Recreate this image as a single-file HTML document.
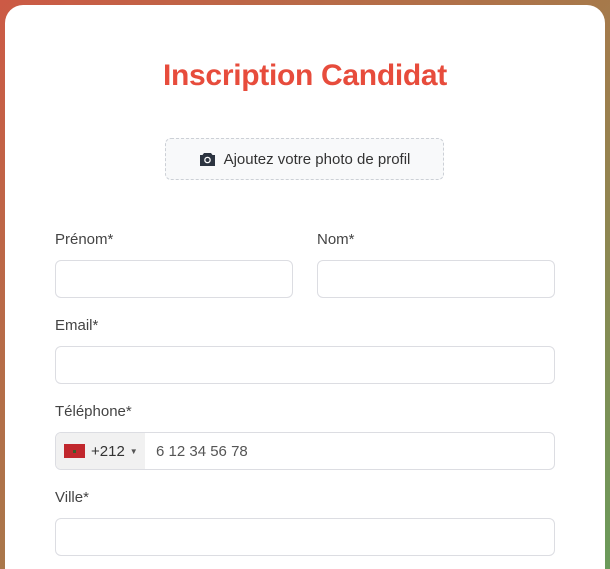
<!DOCTYPE html>
<html><head><meta charset="utf-8"><style>
*{box-sizing:border-box;margin:0;padding:0}
html{width:610px;height:569px;overflow:hidden}
body{width:610px;height:569px;overflow:hidden;background:linear-gradient(135deg,#cc5a45 0%,#a8784a 50%,#6a9a5a 100%);font-family:"Liberation Sans",sans-serif;position:relative}
.card{position:absolute;left:5px;top:5px;width:600px;height:564px;background:#fff;border-radius:18px 18px 0 0}
h1{position:absolute;left:0;width:610px;top:59px;text-align:center;color:#e74c3c;font-size:30px;font-weight:bold;letter-spacing:-0.3px}
.photo{position:absolute;left:165px;top:138px;width:279px;height:42px;border:1px dashed #ccd0d6;border-radius:6px;background:#f8f9fa;color:#333;font-size:15px;display:flex;align-items:center;justify-content:center;gap:8px}
.lbl{position:absolute;font-size:15px;color:#444}
.inp{position:absolute;height:38px;border:1px solid #dcdde2;border-radius:6px;background:#fff}
.cc{position:absolute;left:0;top:0;width:89px;height:36px;background:#f1f1f1;border-radius:5px 0 0 5px;display:flex;align-items:center;font-size:15px;color:#333}
.flag{width:21px;height:14px;background:#c1272d;margin:0 6px 0 8px;position:relative}
.flag:after{content:"";position:absolute;left:9px;top:6px;width:3px;height:3px;background:#3a5a2a}
</style></head><body>
<div class="card"></div>
<h1>Inscription Candidat</h1>
<div class="photo"><svg width="17" height="14" viewBox="0 0 17 14"><path d="M5 1h7l1.5 2H16v11H1V3h2.5z" fill="#2c3440"/><circle cx="8.5" cy="8" r="3.3" fill="#fff"/><circle cx="8.5" cy="8" r="2" fill="#2c3440"/></svg><span>Ajoutez votre photo de profil</span></div>
<div class="lbl" style="left:55px;top:231px">Prénom*</div>
<div class="lbl" style="left:317px;top:231px">Nom*</div>
<div class="inp" style="left:55px;top:260px;width:238px"></div>
<div class="inp" style="left:317px;top:260px;width:238px"></div>
<div class="lbl" style="left:55px;top:317px">Email*</div>
<div class="inp" style="left:55px;top:346px;width:500px"></div>
<div class="lbl" style="left:55px;top:403px">Téléphone*</div>
<div class="inp" style="left:55px;top:432px;width:500px"><div class="cc"><span class="flag"></span>+212<span style="font-size:8px;margin-left:5px;color:#555">▼</span></div><span style="position:absolute;left:100px;top:10px;font-size:15px;color:#555">6 12 34 56 78</span></div>
<div class="lbl" style="left:55px;top:489px">Ville*</div>
<div class="inp" style="left:55px;top:518px;width:500px"></div>
</body></html>
